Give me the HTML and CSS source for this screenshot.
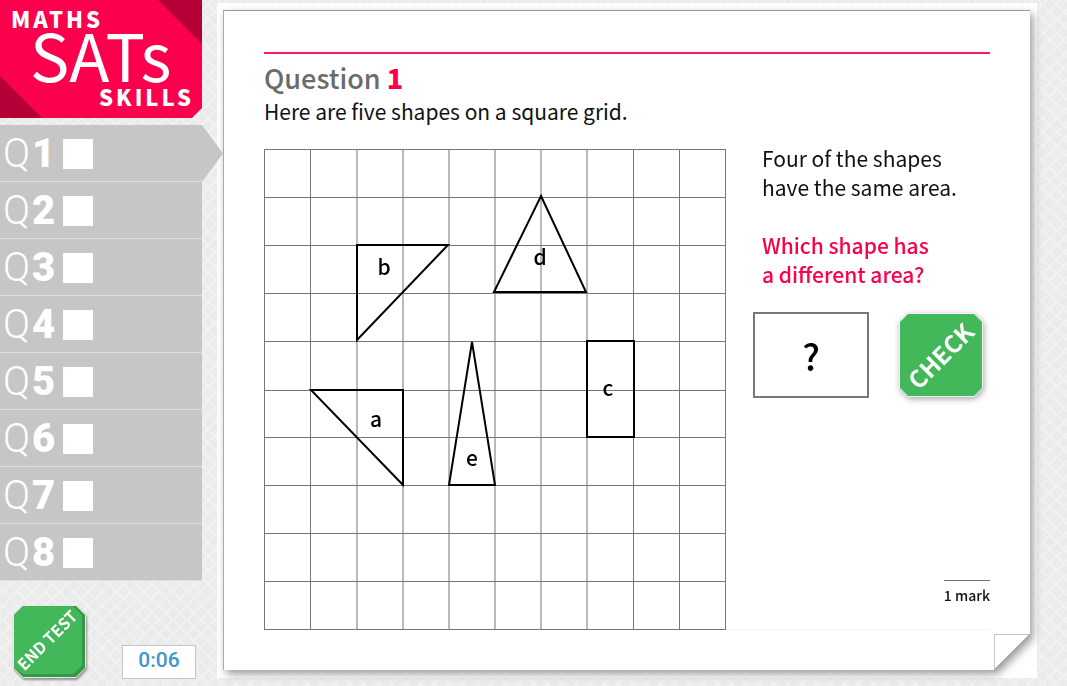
FILE: index.html
```
<!DOCTYPE html>
<html lang="en">
<head>
  <meta charset="UTF-8">
  <meta name="viewport" content="width=device-width, initial-scale=1.0">
  <title>Maths SATs Skills</title>
  <link rel="stylesheet" href="styles.css">
</head>
<body>
<aside class="sidebar">
  <svg class="logo" viewBox="0 0 202 118" role="img" aria-label="Maths SATs Skills">
    <polygon points="0,0 202,0 202,108 192,118 0,118" fill="#fb004d"/>
    <polygon points="158,0 202,0 202,44" fill="#b40037"/>
    <polygon points="0,76 42,118 0,118" fill="#b40037"/>
    <text class="logo-small" x="11" y="28">MATHS</text>
    <text class="logo-big" x="30" y="82">SATs</text>
    <text class="logo-small" x="99" y="106">SKILLS</text>
  </svg>

  <ol class="questions">
    <li class="current"><label for="q1">Q<b>1</b></label><input type="checkbox" id="q1"></li>
    <li><label for="q2">Q<b>2</b></label><input type="checkbox" id="q2"></li>
    <li><label for="q3">Q<b>3</b></label><input type="checkbox" id="q3"></li>
    <li><label for="q4">Q<b>4</b></label><input type="checkbox" id="q4"></li>
    <li><label for="q5">Q<b>5</b></label><input type="checkbox" id="q5"></li>
    <li><label for="q6">Q<b>6</b></label><input type="checkbox" id="q6"></li>
    <li><label for="q7">Q<b>7</b></label><input type="checkbox" id="q7"></li>
    <li><label for="q8">Q<b>8</b></label><input type="checkbox" id="q8"></li>
  </ol>

  <div class="controls">
    <button type="button" class="badge end">
      <svg viewBox="0 0 74 74">
        <polygon points="10,0 63,0 73,10 73,63 63,73 10,73 0,63 0,10" fill="#e4f0e6"/>
        <polygon points="10,1 63,1 72,10 72,63 63,72 10,72 1,63 1,10" fill="#359847"/>
        <polygon points="10,1 60,1 69,10 69,61 60,69 10,69 1,62 1,10" fill="#42b85a"/>
        <text x="35" y="41" transform="rotate(-45 35 36)">END TEST</text>
      </svg>
    </button>
    <div class="timer">0:06</div>
  </div>
</aside>

<main class="board">
  <div class="shade">
    <section class="paper">
      <h1>Question <b>1</b></h1>
      <p class="intro">Here are five shapes on a square grid.</p>

      <div class="task">
        <svg class="grid" viewBox="0 0 462 481">
          <path class="lines" d="M.5 0V481M46.5 0V481M93 0V481M139 0V481M185 0V481M231 0V481M277 0V481M323 0V481M369.5 0V481M415.5 0V481M461.5 0V481
            M0 .5H462M0 48.5H462M0 96.5H462M0 144.5H462M0 192.5H462M0 241.5H462M0 288.5H462M0 336.5H462M0 384.5H462M0 432.5H462M0 480.5H462"/>
          <g class="shapes">
            <polygon points="47,241 139,241 139,336"/>
            <polygon points="93,96 184,96 93,191"/>
            <polygon points="323,192 370,192 370,288 323,288"/>
            <polygon points="277,47 322,143 230,143"/>
            <polygon points="208,193 231,336 185,336"/>
          </g>
          <g class="names">
            <text x="112" y="278">a</text>
            <text x="120" y="126">b</text>
            <text x="344" y="247">c</text>
            <text x="276" y="116">d</text>
            <text x="208" y="317">e</text>
          </g>
        </svg>

        <div class="side">
          <p>Four of the shapes<br>have the same area.</p>
          <p class="ask"><label for="answer">Which shape has<br>a different area?</label></p>
          <div class="answer">
            <input type="text" id="answer" value="?">
            <button type="button" class="badge check">
              <svg viewBox="0 0 84 84">
                <polygon points="9,0 75,0 84,9 84,75 75,84 9,84 0,75 0,9" fill="#f2f2f2"/>
                <polygon points="9,1 75,1 83,9 83,75 75,83 9,83 1,75 1,9" fill="#42b85a"/>
                <text x="42" y="52" transform="rotate(-45 42 43)">CHECK</text>
              </svg>
            </button>
          </div>
          <p class="mark">1 mark</p>
        </div>
      </div>

      <svg class="fold" viewBox="0 0 36 36">
        <path d="M.5 36V.5H36" fill="none" stroke="#c4c4c4"/>
        <path d="M0 36L36 0" fill="none" stroke="#777"/>
      </svg>
    </section>
  </div>
</main>
</body>
</html>
```
FILE: styles.css
```
* {
  box-sizing: border-box;
}
body {
  display: flex;
  gap: 15px;
  min-height: 100vh;
  margin: 0;
  padding-right: 30px;
  font-family: "Noto Sans CJK SC", "Noto Sans", sans-serif;
  font-size: 21px;
  line-height: 29px;
  color: #111;
  background:
    repeating-linear-gradient(45deg, transparent 0 8px, #f1f1f1 8px 10px),
    repeating-linear-gradient(-45deg, transparent 0 8px, #f1f1f1 8px 10px),
    #ebebeb;
}
h1, p, ol {
  margin: 0;
  padding: 0;
}
button {
  padding: 0;
  border: 0;
  background: none;
  font-family: inherit;
  cursor: pointer;
}
svg {
  display: block;
}

/* sidebar */
.sidebar {
  flex: none;
  display: flex;
  flex-direction: column;
  width: 202px;
}
.logo {
  width: 100%;
  fill: #fff;
}
.logo-small {
  font-size: 22px;
  font-weight: 900;
  letter-spacing: 3px;
}
.logo-big {
  font-size: 66px;
  font-weight: 400;
}
.questions {
  margin-top: 7px;
  list-style: none;
}
.questions li {
  display: flex;
  align-items: center;
  height: 57px;
  padding-top: 1px;
  padding-left: 3px;
  border-bottom: 1px solid #dedede;
  background: #c6c6c6;
  color: #fff;
}
.questions .current {
  position: relative;
  z-index: 1;
  margin-right: -21px;
  clip-path: polygon(0 0, 202px 0, 100% 50%, 202px 100%, 0 100%);
}
.questions label {
  width: 60px;
  font: 300 40px/56px Roboto, sans-serif;
}
.questions b {
  margin-left: 2px;
  font-weight: 900;
}
.questions input {
  appearance: none;
  width: 30px;
  height: 30px;
  margin: 0;
  background: #fff;
}
.controls {
  display: flex;
  align-items: flex-end;
  justify-content: space-between;
  margin-top: auto;
  padding: 0 6px 7px 13px;
}
.badge svg {
  width: 100%;
  overflow: visible;
}
.badge text {
  fill: #fff;
  font-weight: 700;
  text-anchor: middle;
}
.end {
  width: 74px;
  filter: drop-shadow(1px 2px 1px rgba(0,0,0,.4));
}
.badge.end text {
  font-size: 16px;
}
.timer {
  width: 74px;
  height: 34px;
  border: 1px solid #c4c4c4;
  background: #fff;
  color: #4295c8;
  font: 500 21px/29px Roboto, sans-serif;
  text-align: center;
}

/* question sheet */
.board {
  flex: 1;
  display: flex;
  margin: 3px 0 8px;
  padding: 7px 7px 8px 6px;
  background: #fff;
}
.shade {
  flex: 1;
  display: flex;
  filter: drop-shadow(3px 4px 4px rgba(0,0,0,.4));
}
.paper {
  position: relative;
  flex: 1;
  padding: 41px 40px 40px;
  border-top: 1px solid #999;
  border-left: 1px solid #aaa;
  background: #fff;
  clip-path: polygon(0 0, 100% 0, 100% calc(100% - 36px), calc(100% - 36px) 100%, 0 100%);
}
h1 {
  padding-top: 9px;
  border-top: 2px solid #fb1a60;
  font-size: 27px;
  line-height: 30px;
  font-weight: 500;
  color: #6b6b6b;
}
h1 b {
  font-weight: 900;
  color: #fb004d;
}
.intro {
  padding-top: 4px;
}
.task {
  display: grid;
  grid-template-columns: 7fr 4fr;
  margin-top: 18px;
}
.grid {
  width: 100%;
  margin-top: 5px;
}
.lines {
  stroke: #777;
}
.shapes {
  fill: none;
  stroke: #000;
  stroke-width: 2;
}
.names {
  font-weight: 500;
  text-anchor: middle;
}
.side {
  display: flex;
  flex-direction: column;
  padding-left: 27px;
  border-bottom: 1px solid #f4f4f4;
}
.side p {
  margin-left: 9px;
}
.side .ask {
  margin-top: 29px;
  font-weight: 500;
  color: #fb004d;
}
.answer {
  display: flex;
  align-items: center;
  gap: 30px;
  margin-top: 23px;
}
.answer input {
  width: 116px;
  height: 86px;
  border: 2px solid #777;
  background: #fff;
  font: 500 36px "Noto Sans CJK SC", sans-serif;
  text-align: center;
}
.check {
  width: 84px;
  filter: drop-shadow(1px 2px 3px rgba(0,0,0,.35));
}
.badge.check text {
  font-size: 24px;
}
.side .mark {
  align-self: flex-end;
  margin-top: auto;
  margin-bottom: 19px;
  border-top: 1px solid #777;
  font-size: 14px;
  font-weight: 500;
}
.fold {
  position: absolute;
  right: 0;
  bottom: 0;
  width: 36px;
}
```
